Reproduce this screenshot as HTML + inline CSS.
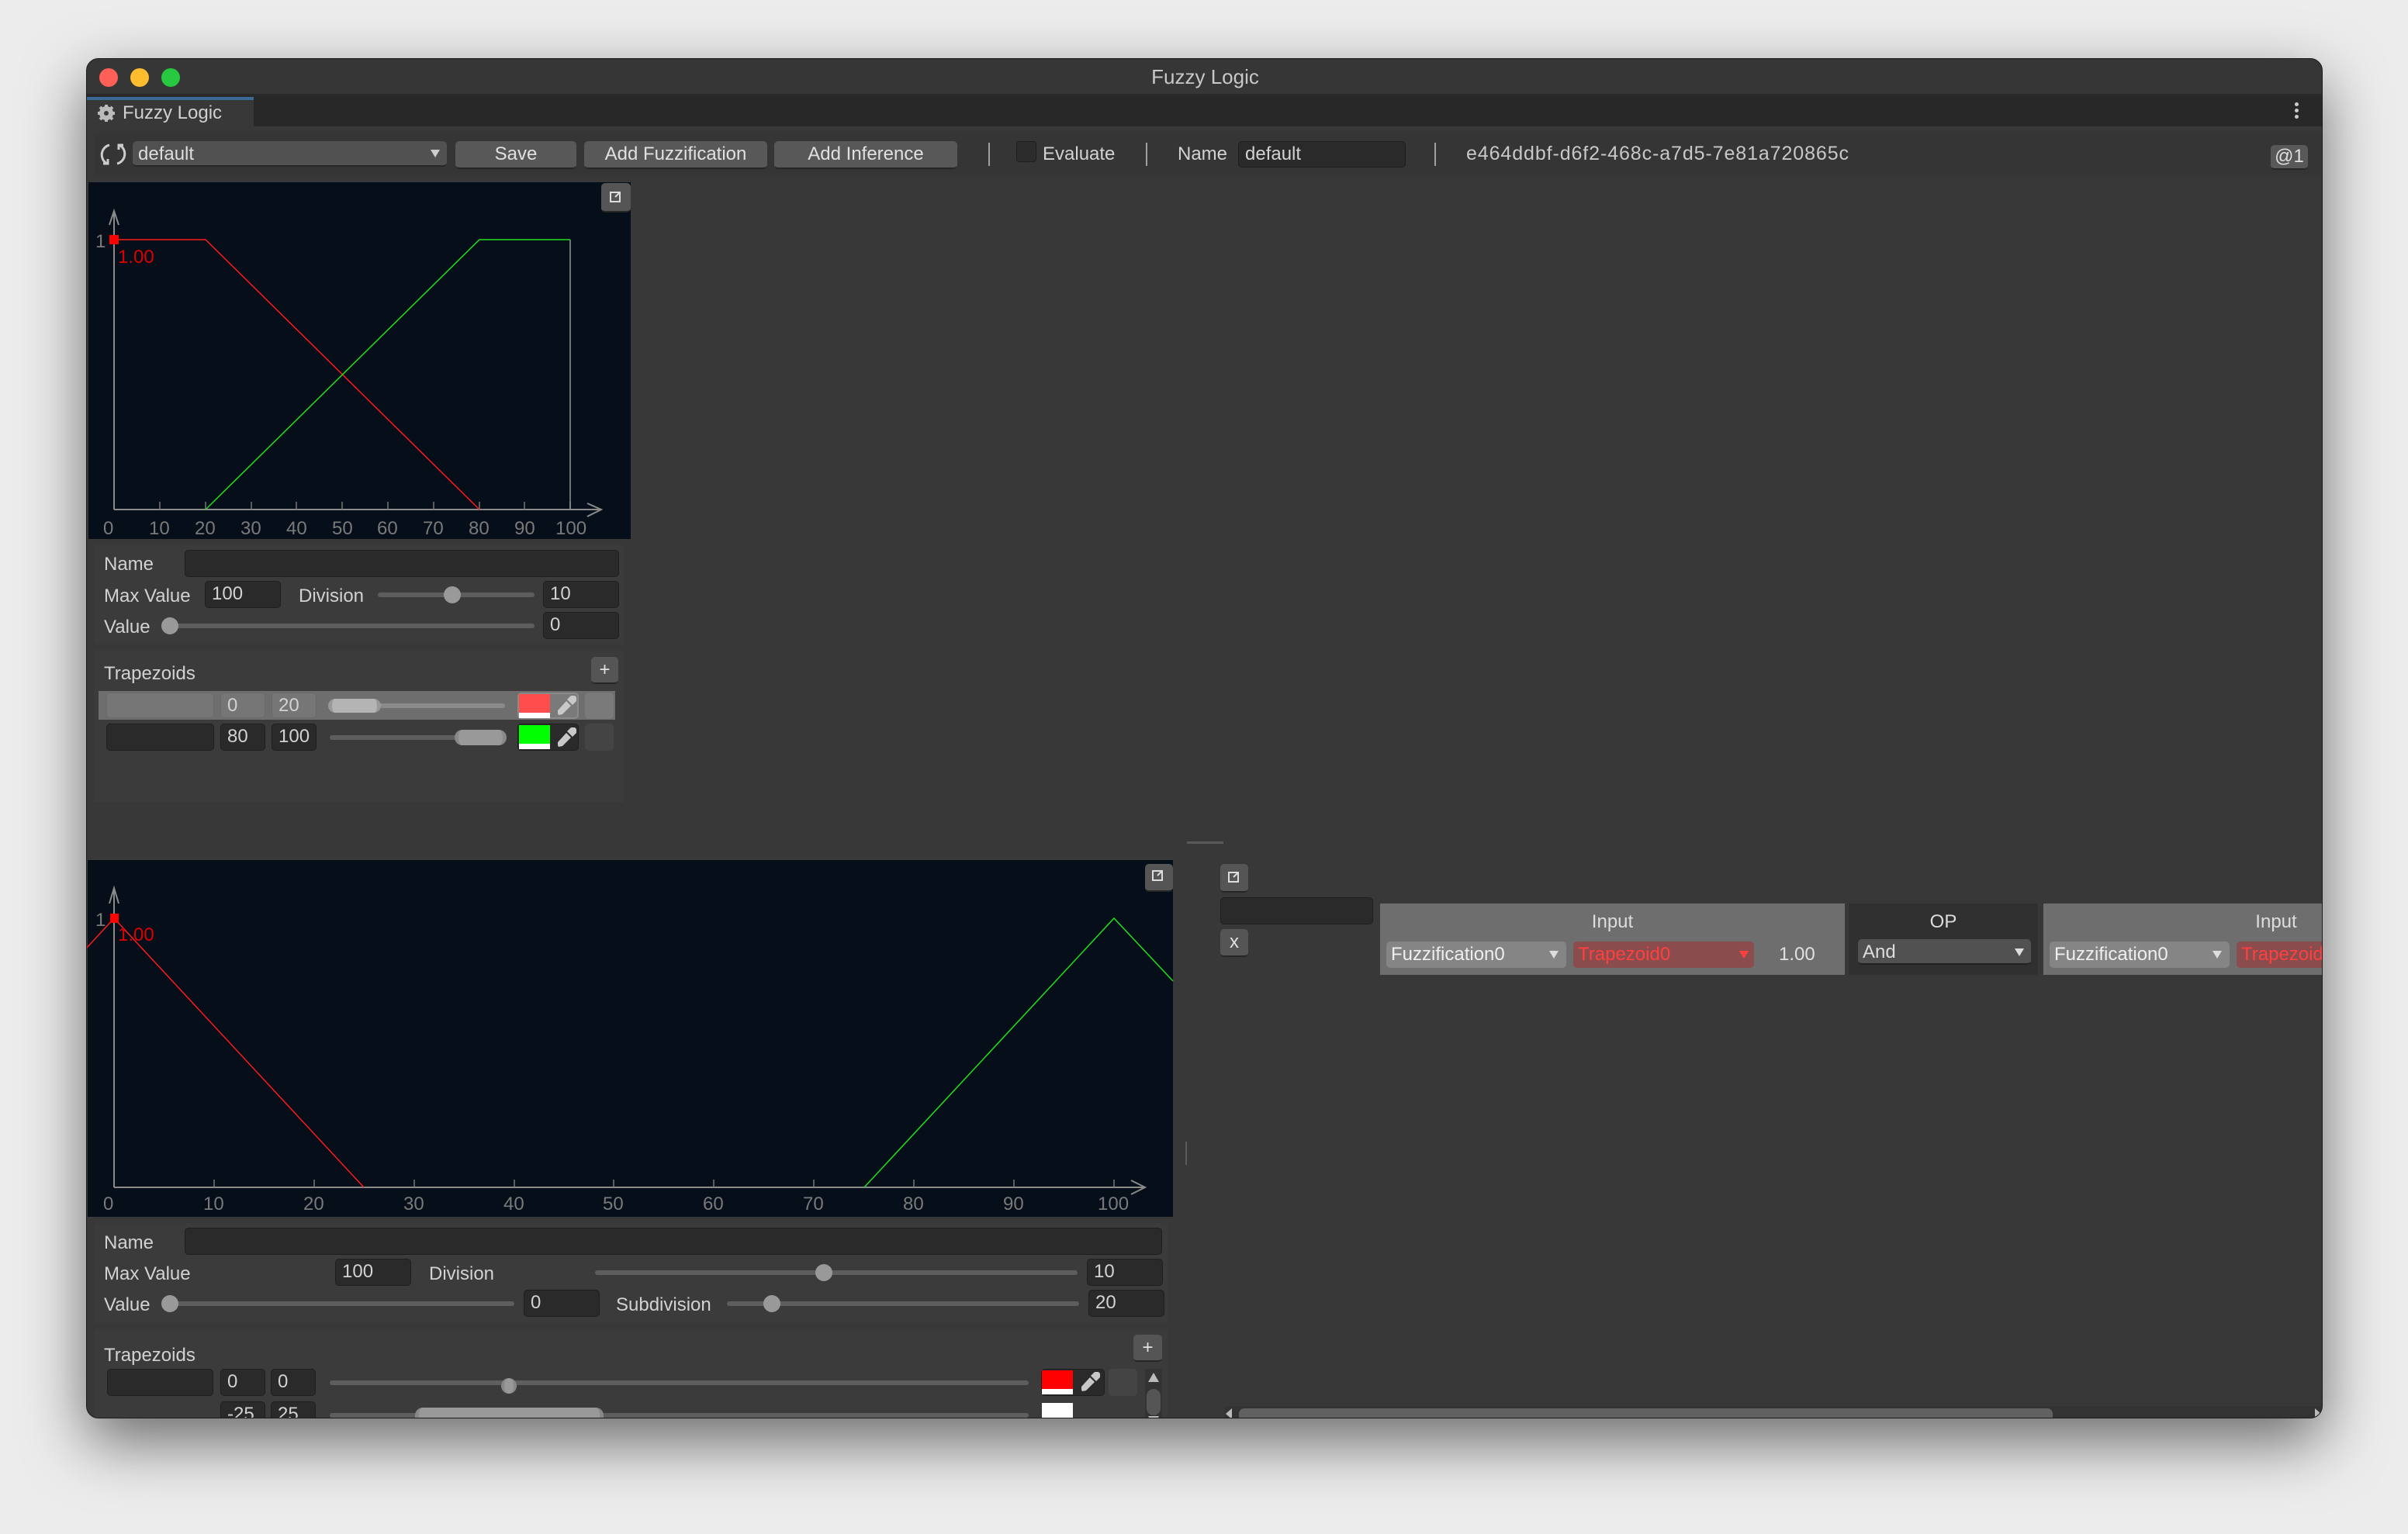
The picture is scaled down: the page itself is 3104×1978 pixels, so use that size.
<!DOCTYPE html>
<html><head><meta charset="utf-8">
<style>
*{box-sizing:border-box;margin:0;padding:0}
body{width:3104px;height:1978px;background:#ececec;font-family:"Liberation Sans",sans-serif;color:#d2d2d2;font-size:24px;position:relative;overflow:hidden}
.a{position:absolute}
.win{left:111px;top:75px;width:2883px;height:1754px;background:#383838;border-radius:16px;overflow:hidden;box-shadow:0 30px 80px rgba(0,0,0,.55);border:1px solid #1c1c1c}
.f{position:absolute;background:#2a2a2a;border:1px solid #1e1e1e;border-radius:5px;color:#d2d2d2;padding-left:8px;line-height:32px;font-size:24px}
.btn{position:absolute;background:#585858;border-radius:5px;border-bottom:2px solid #262626;color:#e0e0e0;text-align:center;font-size:24px}
.t{position:absolute;white-space:nowrap;line-height:1}
.trk{position:absolute;height:6px;background:#5e5e5e;border-radius:3px}
.knob{position:absolute;width:22px;height:22px;border-radius:50%;background:#999}
.panel{position:absolute;background:#3b3b3b}
.graph{position:absolute;background:#050e19}
.sw{position:absolute;border-bottom:7px solid #fff}
</style></head><body>
<div class="a win">
  <div class="a" style="left:0;top:0;width:2883px;height:45px;background:#363636"></div>
  <div class="a" style="left:16px;top:12px;width:24px;height:24px;border-radius:50%;background:#fe5f57"></div>
  <div class="a" style="left:56px;top:12px;width:24px;height:24px;border-radius:50%;background:#febc2e"></div>
  <div class="a" style="left:96px;top:12px;width:24px;height:24px;border-radius:50%;background:#28c840"></div>
  <div class="t" style="left:0;width:2883px;text-align:center;top:10px;font-size:26px;color:#c8c8c8">Fuzzy Logic</div>
  <div class="a" style="left:0;top:45px;width:2883px;height:42px;background:#282828"></div>
  <div class="a" style="left:0;top:49px;width:215px;height:38px;background:#383838;border-top:4px solid #3a6996"></div>
  <svg class="a" style="left:14px;top:59px" width="22" height="22" viewBox="0 0 22 22"><circle cx="11" cy="11" r="7" fill="none" stroke="#bbb" stroke-width="4"/><g stroke="#bbb" stroke-width="4"><line x1="11" y1="0" x2="11" y2="22"/><line x1="0" y1="11" x2="22" y2="11"/><line x1="3" y1="3" x2="19" y2="19"/><line x1="19" y1="3" x2="3" y2="19"/></g><circle cx="11" cy="11" r="3" fill="#383838"/></svg>
  <div class="t" style="left:46px;top:58px;color:#d0d0d0">Fuzzy Logic</div>
  <div class="a" style="left:2846px;top:56px;width:5px;height:5px;background:#ccc;border-radius:50%;box-shadow:0 8px 0 #ccc,0 16px 0 #ccc"></div>
  <div class="a" style="left:9px;top:95px;width:2874px;height:56px;background:#353535"></div>
  <svg class="a" style="left:17px;top:106px" width="34" height="34" viewBox="0 0 34 34" fill="none" stroke="#ccc" stroke-width="3"><path d="M12 5 A13 13 0 0 0 9 29"/><path d="M4 29 L10 29 L10 23"/><path d="M22 29 A13 13 0 0 0 25 5"/><path d="M30 5 L24 5 L24 11"/></svg>
  <div class="a" style="left:59px;top:106px;width:405px;height:33px;background:#515151;border-radius:5px;border-bottom:2px solid #262626"></div>
  <div class="t" style="left:66px;top:111px;color:#ddd">default</div>
  <svg class="a" style="left:443px;top:117px" width="12" height="10"><path d="M0 0H12L6 10Z" fill="#ccc"/></svg>
  <div class="btn" style="left:475px;top:106px;width:156px;height:36px;line-height:34px">Save</div>
  <div class="btn" style="left:641px;top:106px;width:236px;height:36px;line-height:34px">Add Fuzzification</div>
  <div class="btn" style="left:886px;top:106px;width:236px;height:36px;line-height:34px">Add Inference</div>
  <div class="a" style="left:1162px;top:108px;width:2px;height:30px;background:#a0a0a0"></div>
  <div class="a" style="left:1198px;top:106px;width:26px;height:27px;background:#2c2c2c;border:1px solid #1e1e1e;border-radius:4px"></div>
  <div class="t" style="left:1232px;top:111px">Evaluate</div>
  <div class="a" style="left:1365px;top:108px;width:2px;height:30px;background:#a0a0a0"></div>
  <div class="t" style="left:1406px;top:111px">Name</div>
  <div class="f" style="left:1484px;top:106px;width:216px;height:34px">default</div>
  <div class="a" style="left:1737px;top:108px;width:2px;height:30px;background:#a0a0a0"></div>
  <div class="t" style="left:1778px;top:110px;color:#c8c8c8;font-size:25px;letter-spacing:0.9px">e464ddbf-d6f2-468c-a7d5-7e81a720865c</div>
  <div class="btn" style="left:2815px;top:111px;width:48px;height:32px;line-height:30px">@1</div>

  <div class="graph" style="left:2px;top:159px;width:699px;height:460px"></div>
  <div class="btn" style="left:663px;top:160px;width:38px;height:38px;background:#555"></div>
  <div class="panel" style="left:9px;top:627px;width:683px;height:128px"></div>
  <div class="t" style="left:22px;top:640px">Name</div>
  <div class="f" style="left:126px;top:633px;width:560px;height:35px"></div>
  <div class="t" style="left:22px;top:681px">Max Value</div>
  <div class="f" style="left:152px;top:673px;width:98px;height:35px">100</div>
  <div class="t" style="left:273px;top:681px">Division</div>
  <div class="trk" style="left:375px;top:688px;width:202px"></div>
  <div class="knob" style="left:460px;top:680px"></div>
  <div class="f" style="left:588px;top:673px;width:98px;height:35px">10</div>
  <div class="t" style="left:22px;top:721px">Value</div>
  <div class="trk" style="left:107px;top:728px;width:470px"></div>
  <div class="knob" style="left:96px;top:720px"></div>
  <div class="f" style="left:588px;top:713px;width:98px;height:35px">0</div>
  <div class="panel" style="left:9px;top:763px;width:683px;height:195px"></div>
  <div class="t" style="left:22px;top:781px">Trapezoids</div>
  <div class="btn" style="left:650px;top:771px;width:35px;height:35px;line-height:33px;background:#555">+</div>
  <div class="a" style="left:15px;top:815px;width:666px;height:37px;background:#6e6e6e"></div>
  <div class="f" style="left:25px;top:817px;width:139px;height:33px;background:#767676;border-color:#6a6a6a"></div>
  <div class="f" style="left:172px;top:817px;width:58px;height:33px;background:#767676;border-color:#6a6a6a;line-height:31px">0</div>
  <div class="f" style="left:238px;top:817px;width:58px;height:33px;background:#767676;border-color:#6a6a6a;line-height:31px">20</div>
  <div class="trk" style="left:311px;top:831px;width:228px;background:#8a8a8a"></div>
  <div class="a" style="left:311px;top:825px;width:68px;height:18px;background:#b4b4b4;border-radius:9px;border-left:5px solid #999;border-right:5px solid #999"></div>
  <div class="a" style="left:555px;top:817px;width:79px;height:34px;background:#7a7a7a;border:2px solid #8a8a8a;border-radius:5px"></div>
  <div class="sw" style="left:557px;top:819px;width:40px;height:31px;background:#ff4d4d"></div>
  <svg class="a" style="left:605px;top:821px" width="26" height="26" viewBox="0 0 26 26"><path d="M18 1 A4 4 0 0 1 25 8 L21 12 L14 5 Z M13 7 L19 13 L8 24 L3 25 L2 23 L2 19 Z" fill="#c8c8c8"/></svg>
  <div class="a" style="left:642px;top:817px;width:37px;height:34px;background:#7a7a7a;border-radius:5px"></div>
  <div class="f" style="left:25px;top:857px;width:139px;height:35px"></div>
  <div class="f" style="left:172px;top:857px;width:58px;height:35px">80</div>
  <div class="f" style="left:238px;top:857px;width:58px;height:35px">100</div>
  <div class="trk" style="left:313px;top:872px;width:228px"></div>
  <div class="a" style="left:474px;top:865px;width:67px;height:20px;background:#999;border-radius:10px;border-left:5px solid #888;border-right:5px solid #888"></div>
  <div class="a" style="left:555px;top:857px;width:79px;height:35px;background:#2a2a2a;border:1px solid #1e1e1e;border-radius:5px"></div>
  <div class="sw" style="left:557px;top:859px;width:40px;height:31px;background:#00ff00"></div>
  <svg class="a" style="left:605px;top:862px" width="26" height="26" viewBox="0 0 26 26"><path d="M18 1 A4 4 0 0 1 25 8 L21 12 L14 5 Z M13 7 L19 13 L8 24 L3 25 L2 23 L2 19 Z" fill="#c8c8c8"/></svg>
  <div class="a" style="left:642px;top:857px;width:37px;height:35px;background:#444;border-radius:5px"></div>

  <div class="a" style="left:1418px;top:1009px;width:47px;height:3px;background:#5a5a5a"></div>
  <div class="a" style="left:1416px;top:1396px;width:2px;height:30px;background:#5a5a5a"></div>

  <div class="graph" style="left:1px;top:1033px;width:1399px;height:460px"></div>
  <div class="btn" style="left:1364px;top:1038px;width:36px;height:36px;background:#555"></div>
  <div class="panel" style="left:9px;top:1501px;width:1384px;height:128px"></div>
  <div class="t" style="left:22px;top:1515px">Name</div>
  <div class="f" style="left:126px;top:1507px;width:1260px;height:35px"></div>
  <div class="t" style="left:22px;top:1555px">Max Value</div>
  <div class="f" style="left:320px;top:1547px;width:98px;height:35px">100</div>
  <div class="t" style="left:441px;top:1555px">Division</div>
  <div class="trk" style="left:655px;top:1562px;width:622px"></div>
  <div class="knob" style="left:939px;top:1554px"></div>
  <div class="f" style="left:1289px;top:1547px;width:98px;height:35px">10</div>
  <div class="t" style="left:22px;top:1595px">Value</div>
  <div class="trk" style="left:107px;top:1602px;width:444px"></div>
  <div class="knob" style="left:96px;top:1594px"></div>
  <div class="f" style="left:563px;top:1587px;width:98px;height:35px">0</div>
  <div class="t" style="left:682px;top:1595px">Subdivision</div>
  <div class="trk" style="left:825px;top:1602px;width:454px"></div>
  <div class="knob" style="left:872px;top:1594px"></div>
  <div class="f" style="left:1291px;top:1587px;width:98px;height:35px">20</div>
  <div class="panel" style="left:9px;top:1637px;width:1384px;height:130px"></div>
  <div class="t" style="left:22px;top:1660px">Trapezoids</div>
  <div class="btn" style="left:1349px;top:1645px;width:37px;height:35px;line-height:33px;background:#555">+</div>
  <div class="f" style="left:26px;top:1689px;width:137px;height:35px"></div>
  <div class="f" style="left:172px;top:1689px;width:58px;height:35px">0</div>
  <div class="f" style="left:237px;top:1689px;width:58px;height:35px">0</div>
  <div class="trk" style="left:313px;top:1704px;width:901px"></div>
  <div class="a" style="left:534px;top:1701px;width:20px;height:20px;background:#999;border-radius:10px;border-left:4px solid #888;border-right:4px solid #888"></div>
  <div class="a" style="left:1230px;top:1689px;width:82px;height:35px;background:#2a2a2a;border:1px solid #1e1e1e;border-radius:5px"></div>
  <div class="sw" style="left:1231px;top:1691px;width:40px;height:31px;background:#ff0000"></div>
  <svg class="a" style="left:1280px;top:1693px" width="26" height="26" viewBox="0 0 26 26"><path d="M18 1 A4 4 0 0 1 25 8 L21 12 L14 5 Z M13 7 L19 13 L8 24 L3 25 L2 23 L2 19 Z" fill="#c8c8c8"/></svg>
  <div class="a" style="left:1317px;top:1689px;width:37px;height:35px;background:#444;border-radius:5px"></div>
  <div class="a" style="left:1364px;top:1689px;width:22px;height:80px;background:#333"></div>
  <svg class="a" style="left:1368px;top:1694px" width="14" height="12"><path d="M7 0L14 12H0Z" fill="#bbb"/></svg>
  <div class="a" style="left:1366px;top:1715px;width:18px;height:34px;background:#555;border-radius:9px"></div>
  <svg class="a" style="left:1368px;top:1750px" width="14" height="12"><path d="M0 0H14L7 12Z" fill="#bbb"/></svg>
  <div class="f" style="left:172px;top:1731px;width:58px;height:35px">-25</div>
  <div class="f" style="left:237px;top:1731px;width:58px;height:35px">25</div>
  <div class="trk" style="left:313px;top:1746px;width:901px"></div>
  <div class="a" style="left:423px;top:1739px;width:243px;height:22px;background:#999;border-radius:10px;border-left:5px solid #888;border-right:5px solid #888"></div>
  <div class="a" style="left:1231px;top:1733px;width:40px;height:31px;background:#fff"></div>

  <div class="btn" style="left:1461px;top:1038px;width:36px;height:37px;background:#555"></div>
  <div class="f" style="left:1461px;top:1081px;width:197px;height:35px"></div>
  <div class="btn" style="left:1461px;top:1122px;width:36px;height:36px;line-height:34px;background:#555">x</div>
  <div class="a" style="left:1667px;top:1089px;width:599px;height:92px;background:#6e6e6e"></div>
  <div class="t" style="left:1667px;width:599px;text-align:center;top:1101px;color:#ddd">Input</div>
  <div class="a" style="left:1675px;top:1138px;width:232px;height:34px;background:#858585;border-radius:5px"></div>
  <div class="t" style="left:1681px;top:1143px;color:#eee">Fuzzification0</div>
  <svg class="a" style="left:1885px;top:1150px" width="12" height="10"><path d="M0 0H12L6 10Z" fill="#ddd"/></svg>
  <div class="a" style="left:1916px;top:1138px;width:233px;height:34px;background:#8a4c4c;border-radius:5px"></div>
  <div class="t" style="left:1922px;top:1143px;color:#ff4040">Trapezoid0</div>
  <svg class="a" style="left:2130px;top:1150px" width="12" height="10"><path d="M0 0H12L6 10Z" fill="#ff4040"/></svg>
  <div class="t" style="left:2181px;top:1143px;color:#e0e0e0">1.00</div>
  <div class="a" style="left:2271px;top:1089px;width:244px;height:92px;background:#303030"></div>
  <div class="t" style="left:2271px;width:244px;text-align:center;top:1101px;color:#ddd">OP</div>
  <div class="a" style="left:2283px;top:1135px;width:223px;height:33px;background:#515151;border-radius:5px;border-bottom:2px solid #222"></div>
  <div class="t" style="left:2289px;top:1140px;color:#ddd">And</div>
  <svg class="a" style="left:2485px;top:1147px" width="12" height="10"><path d="M0 0H12L6 10Z" fill="#ddd"/></svg>
  <div class="a" style="left:2522px;top:1089px;width:361px;height:92px;background:#6e6e6e"></div>
  <div class="t" style="left:2522px;width:600px;text-align:center;top:1101px;color:#ddd">Input</div>
  <div class="a" style="left:2530px;top:1138px;width:232px;height:34px;background:#858585;border-radius:5px"></div>
  <div class="t" style="left:2536px;top:1143px;color:#eee">Fuzzification0</div>
  <svg class="a" style="left:2740px;top:1150px" width="12" height="10"><path d="M0 0H12L6 10Z" fill="#ddd"/></svg>
  <div class="a" style="left:2771px;top:1138px;width:233px;height:34px;background:#8a4c4c;border-radius:5px"></div>
  <div class="t" style="left:2777px;top:1143px;color:#ff4040">Trapezoid0</div>
  <div class="a" style="left:1467px;top:1737px;width:1416px;height:17px;background:#333"></div>
  <div class="a" style="left:1485px;top:1740px;width:1049px;height:14px;background:#616161;border-radius:7px 7px 0 0"></div>
  <svg class="a" style="left:1468px;top:1740px" width="8" height="14"><path d="M8 0V14L0 7Z" fill="#bbb"/></svg>
  <svg class="a" style="left:2872px;top:1740px" width="8" height="14"><path d="M0 0V14L8 7Z" fill="#bbb"/></svg>
</div>

<svg class="a" style="left:0;top:0" width="3104" height="1978" font-family="Liberation Sans" font-size="24" fill="none">
  <g stroke="#ddd" stroke-width="2"><rect x="787" y="248" width="12" height="12"/><path d="M793 254 L799 248 M795 248 H799 V252"/>
  <rect x="1486" y="1123" width="12" height="12"/><path d="M1492 1129 L1498 1123 M1494 1123 H1498 V1127"/>
  <rect x="1584" y="1125" width="12" height="12"/><path d="M1590 1131 L1596 1125 M1592 1125 H1596 V1129"/></g>
  <g stroke="#8a8a8a" stroke-width="2">
    <line x1="147" y1="272" x2="147" y2="657"/><path d="M141 290 L147 272 L153 290"/>
    <line x1="147" y1="657" x2="775" y2="657"/><path d="M757 649 L775 657 L757 666"/>
  </g>
  <g stroke="#777" stroke-width="1.5">
    <line x1="206" y1="647" x2="206" y2="657"/><line x1="265" y1="647" x2="265" y2="657"/><line x1="324" y1="647" x2="324" y2="657"/><line x1="382" y1="647" x2="382" y2="657"/><line x1="441" y1="647" x2="441" y2="657"/><line x1="500" y1="647" x2="500" y2="657"/><line x1="559" y1="647" x2="559" y2="657"/><line x1="618" y1="647" x2="618" y2="657"/><line x1="676" y1="647" x2="676" y2="657"/><line x1="735" y1="647" x2="735" y2="657"/>
  </g>
  <g fill="#7a7a7a">
    <text x="133" y="689">0</text><text x="192" y="689">10</text><text x="251" y="689">20</text><text x="310" y="689">30</text><text x="369" y="689">40</text><text x="428" y="689">50</text><text x="486" y="689">60</text><text x="545" y="689">70</text><text x="604" y="689">80</text><text x="663" y="689">90</text><text x="716" y="689">100</text>
    <text x="123" y="319">1</text>
  </g>
  <path d="M147 309 H265 L618 657" stroke="#ff1a1a" stroke-width="1.5"/>
  <path d="M265 657 L618 309 H735" stroke="#1ee01e" stroke-width="1.5"/>
  <line x1="735" y1="309" x2="735" y2="657" stroke="#8a9a8a" stroke-width="1.5"/>
  <rect x="141" y="303" width="12" height="12" fill="#ff0000"/>
  <text x="152" y="339" fill="#dd0000">1.00</text>
  <g stroke="#8a8a8a" stroke-width="2">
    <line x1="147" y1="1145" x2="147" y2="1531"/><path d="M141 1165 L147 1145 L153 1165"/>
    <line x1="147" y1="1531" x2="1476" y2="1531"/><path d="M1458 1522 L1476 1531 L1458 1540"/>
  </g>
  <g stroke="#777" stroke-width="1.5">
    <line x1="276" y1="1521" x2="276" y2="1531"/><line x1="405" y1="1521" x2="405" y2="1531"/><line x1="534" y1="1521" x2="534" y2="1531"/><line x1="663" y1="1521" x2="663" y2="1531"/><line x1="791" y1="1521" x2="791" y2="1531"/><line x1="920" y1="1521" x2="920" y2="1531"/><line x1="1049" y1="1521" x2="1049" y2="1531"/><line x1="1178" y1="1521" x2="1178" y2="1531"/><line x1="1307" y1="1521" x2="1307" y2="1531"/><line x1="1436" y1="1521" x2="1436" y2="1531"/>
  </g>
  <g fill="#7a7a7a">
    <text x="133" y="1560">0</text><text x="262" y="1560">10</text><text x="391" y="1560">20</text><text x="520" y="1560">30</text><text x="649" y="1560">40</text><text x="777" y="1560">50</text><text x="906" y="1560">60</text><text x="1035" y="1560">70</text><text x="1164" y="1560">80</text><text x="1293" y="1560">90</text><text x="1415" y="1560">100</text>
    <text x="123" y="1194">1</text>
  </g>
  <path d="M112 1222 L147 1184 L469 1531" stroke="#ff1a1a" stroke-width="1.5"/>
  <path d="M1114 1531 L1436 1184 L1512 1265" stroke="#1ee01e" stroke-width="1.5"/>
  <rect x="142" y="1178" width="11" height="12" fill="#ff0000"/>
  <text x="152" y="1213" fill="#dd0000">1.00</text>
</svg>
</body></html>
